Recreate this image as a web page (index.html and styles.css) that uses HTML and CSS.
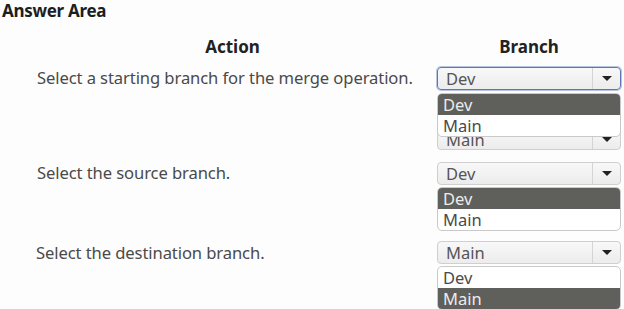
FILE: index.html
```html
<!DOCTYPE html>
<html lang="en">
<head>
  <meta charset="UTF-8">
  <title>Answer Area</title>
  <link rel="stylesheet" href="styles.css">
</head>
<body>
  <h1 class="title">Answer Area</h1>
  <div class="grid">
    <div class="head">Action</div>
    <div class="head">Branch</div>

    <div class="action">Select a starting branch for the merge operation.</div>
    <div class="branch first">
      <div class="select focused"><span class="value">Dev</span><span class="arrow"></span></div>
      <div class="list">
        <div class="option selected">Dev</div>
        <div class="option">Main</div>
      </div>
      <div class="select behind"><span class="value">Main</span><span class="arrow"></span></div>
    </div>

    <div class="action">Select the source branch.</div>
    <div class="branch">
      <div class="select"><span class="value">Dev</span><span class="arrow"></span></div>
      <div class="list">
        <div class="option selected">Dev</div>
        <div class="option">Main</div>
      </div>
    </div>

    <div class="action last">Select the destination branch.</div>
    <div class="branch">
      <div class="select"><span class="value">Main</span><span class="arrow"></span></div>
      <div class="list">
        <div class="option">Dev</div>
        <div class="option selected">Main</div>
      </div>
    </div>
  </div>
</body>
</html>
```

FILE: styles.css
```css
body {
  margin: 0;
  font-family: 'Noto Sans', 'Open Sans', Arial, sans-serif;
  background: #fdfdfd;
  color: #444;
}
.title {
  margin: 0;
  padding: 1px 2px 0 2px;
  font-size: 17px;
  line-height: 19px;
  font-weight: 700;
  color: #1e1e1e;
  letter-spacing: -0.3px;
}
.grid {
  display: grid;
  grid-template-columns: 409px 184px;
  margin: 17px 0 0 28px;
}
.head {
  text-align: center;
  font-size: 17px;
  line-height: 20px;
  font-weight: 700;
  color: #222;
  margin-bottom: 10px;
}
.action {
  padding-left: 9px;
  font-size: 16.6px;
  line-height: 22px;
  color: #4a4a4a;
  letter-spacing: -0.1px;
}
.action.last {
  padding-left: 8px;
  margin-top: 1px;
}
.branch {
  display: flex;
  flex-direction: column;
  margin-bottom: 10px;
}
.branch.first {
  margin-bottom: 12px;
}
.select {
  display: flex;
  height: 21px;
  border: 1px solid #cfcfcf;
  border-radius: 4px;
  background: linear-gradient(#f8f8f8, #ececec);
  font-size: 16.5px;
  color: #555;
}
.select.focused {
  border-color: #5d79b3;
  box-shadow: 0 0 0 1px #b7c5e0;
}
.select.behind {
  margin-top: -9px;
  height: 20px;
}
.value {
  flex: 1;
  padding-left: 8px;
  line-height: 21px;
}
.arrow {
  width: 27px;
  border-left: 1px solid #d4d4d4;
  display: flex;
  align-items: center;
  justify-content: center;
}
.arrow:after {
  content: "";
  border-left: 5px solid transparent;
  border-right: 5px solid transparent;
  border-top: 5px solid #222;
}
.list {
  position: relative;
  z-index: 1;
  margin-top: 2px;
  border: 1px solid #c9c9c9;
  border-radius: 5px;
  background: #fff;
  overflow: hidden;
}
.select.focused + .list {
  margin-top: 3px;
}
.option {
  height: 21px;
  line-height: 21px;
  padding-left: 5px;
  font-size: 16.5px;
  color: #4a4a4a;
}
.option.selected {
  background: #5f5f5b;
  color: #ececec;
}
```
